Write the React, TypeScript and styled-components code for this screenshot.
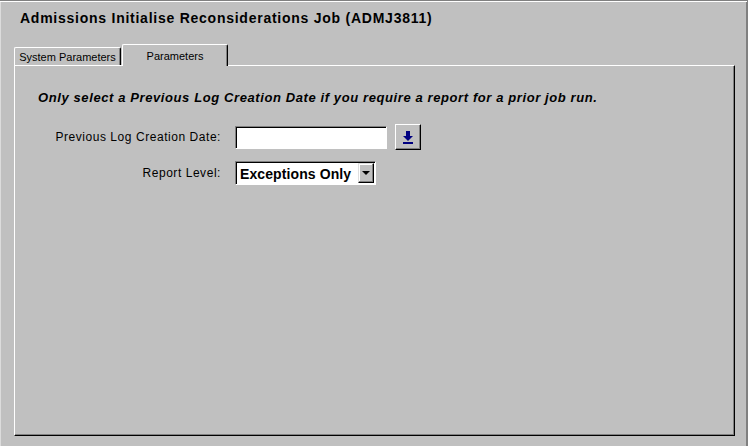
import { FC } from 'react';
import styled, { createGlobalStyle } from 'styled-components';

const GlobalStyle = createGlobalStyle`
	html, body {
		margin: 0;
		padding: 0;
		background: #c0c0c0;
	}
	body {
		font-family: 'Liberation Sans', Arial, sans-serif;
		color: #000;
	}
`;

const tabs = [
	{ label: 'System Parameters', active: false },
	{ label: 'Parameters', active: true },
];

const DownArrow: FC = () => (
	<svg width="10" height="13" viewBox="0 0 10 13">
		<rect x="3" y="0" width="4" height="6" fill="#000080" />
		<polygon points="0,5 10,5 5,10" fill="#000080" />
		<rect x="0" y="11" width="10" height="2" fill="#000080" />
	</svg>
);

const App: FC = () => (
	<>
		<GlobalStyle />
		<Window>
			<Title>Admissions Initialise Reconsiderations Job (ADMJ3811)</Title>
			<TabStrip>
				{tabs.map((tab) => (
					<Tab key={tab.label} $active={tab.active}>
						{tab.label}
					</Tab>
				))}
			</TabStrip>
			<Panel>
				<Hint>
					Only select a Previous Log Creation Date if you require a report for a prior job
					run.
				</Hint>
				<Form>
					<Label>Previous Log Creation Date:</Label>
					<Control>
						<TextBox />
						<PickButton>
							<DownArrow />
						</PickButton>
					</Control>
					<Label>Report Level:</Label>
					<Control>
						<Combo>
							<ComboText>Exceptions Only</ComboText>
							<ComboButton>
								<Caret />
							</ComboButton>
						</Combo>
					</Control>
				</Form>
			</Panel>
		</Window>
	</>
);

export default App;

const Window = styled.div`
	box-sizing: border-box;
	width: 748px;
	height: 446px;
	display: flex;
	flex-direction: column;
	padding: 0 12px 10px 14px;
	background: #c0c0c0;
	border-top: 1px solid #808080;
	border-right: 1px solid #808080;
	box-shadow: inset 0 1px 0 #ffffff, inset -1px 0 0 #808080, inset 1px 0 0 #dcdcdc;
`;

const Title = styled.div`
	box-sizing: border-box;
	height: 23px;
	padding: 9px 0 0 6px;
	font-size: 14px;
	line-height: 16px;
	font-weight: bold;
	letter-spacing: 0.75px;
	white-space: nowrap;
`;

const TabStrip = styled.div`
	display: flex;
	align-items: flex-end;
	height: 41px;
	position: relative;
	z-index: 1;
`;

const Tab = styled.div<{ $active: boolean }>`
	box-sizing: border-box;
	width: ${(p) => (p.$active ? '106px' : '107px')};
	height: ${(p) => (p.$active ? '22px' : '18px')};
	margin-left: ${(p) => (p.$active ? '1px' : '0')};
	margin-bottom: ${(p) => (p.$active ? '-1px' : '0')};
	background: #c0c0c0;
	border-top: 1px solid #ffffff;
	border-left: 1px solid #ffffff;
	border-right: 1px solid #000000;
	border-top-left-radius: 2px;
	border-top-right-radius: 2px;
	box-shadow: inset -1px 0 0 #808080;
	font-size: 11px;
	line-height: ${(p) => (p.$active ? '20px' : '16px')};
	padding-top: 1px;
	text-align: center;
	white-space: nowrap;
`;

const Panel = styled.div`
	flex: 1;
	box-sizing: border-box;
	border-top: 1px solid #ffffff;
	border-left: 1px solid #ffffff;
	border-right: 1px solid #000000;
	border-bottom: 1px solid #000000;
	box-shadow: inset -1px -1px 0 #808080;
	padding: 24px 0 0 23px;
`;

const Hint = styled.div`
	font-size: 13px;
	line-height: 16px;
	font-weight: bold;
	font-style: italic;
	letter-spacing: 0.6px;
	white-space: nowrap;
`;

const Form = styled.div`
	display: grid;
	grid-template-columns: 183px auto;
	column-gap: 14px;
	row-gap: 11px;
	align-items: center;
	margin-top: 18px;
`;

const Label = styled.div`
	text-align: right;
	font-size: 12px;
	line-height: 16px;
	letter-spacing: 0.55px;
	white-space: nowrap;
`;

const Control = styled.div`
	display: flex;
	align-items: center;
	gap: 8px;
`;

const TextBox = styled.div`
	box-sizing: border-box;
	width: 152px;
	height: 23px;
	background: #ffffff;
	border-top: 1px solid #808080;
	border-left: 1px solid #808080;
	border-right: 1px solid #ffffff;
	border-bottom: 1px solid #ffffff;
	box-shadow: inset 1px 1px 0 #000000;
`;

const PickButton = styled.div`
	box-sizing: border-box;
	width: 26px;
	height: 26px;
	display: flex;
	align-items: center;
	justify-content: center;
	background: #c0c0c0;
	border-top: 1px solid #ffffff;
	border-left: 1px solid #ffffff;
	border-right: 1px solid #000000;
	border-bottom: 1px solid #000000;
	box-shadow: inset -1px -1px 0 #808080;
	padding-top: 1px;
`;

const Combo = styled.div`
	box-sizing: border-box;
	width: 141px;
	height: 24px;
	display: flex;
	align-items: center;
	background: #ffffff;
	border-top: 1px solid #808080;
	border-left: 1px solid #808080;
	border-right: 1px solid #ffffff;
	border-bottom: 1px solid #ffffff;
	box-shadow: inset 1px 1px 0 #000000;
	padding: 1px 1px 0 4px;
`;

const ComboText = styled.div`
	flex: 1;
	font-size: 14px;
	font-weight: bold;
	line-height: 18px;
	letter-spacing: 0.1px;
	white-space: nowrap;
`;

const ComboButton = styled.div`
	box-sizing: border-box;
	width: 16px;
	height: 20px;
	display: flex;
	align-items: center;
	justify-content: center;
	background: #c0c0c0;
	border-top: 1px solid #dfdfdf;
	border-left: 1px solid #dfdfdf;
	border-right: 1px solid #000000;
	border-bottom: 1px solid #000000;
	box-shadow: inset -1px -1px 0 #808080, inset 1px 1px 0 #ffffff;
	margin-bottom: 1px;
`;

const Caret = styled.div`
	width: 0;
	height: 0;
	border-left: 4px solid transparent;
	border-right: 4px solid transparent;
	border-top: 4px solid #000000;
`;
